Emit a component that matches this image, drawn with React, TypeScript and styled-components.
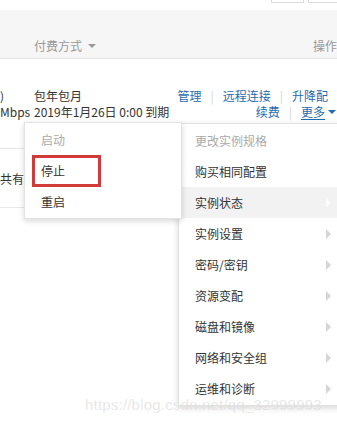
import React from "react";
import styled, { createGlobalStyle } from "styled-components";

const Global = createGlobalStyle`
  html, body { margin: 0; padding: 0; background: #fff; }
  body { width: 337px; height: 423px; overflow: hidden; font-family: "Noto Sans CJK SC", "Noto Sans", sans-serif; font-size: 12px; color: #333; }
`;

const Page = styled.div`
  position: relative;
  width: 337px;
  height: 423px;
  overflow: hidden;
  background: #fff;
`;

const Toolbar = styled.div`
  height: 10px;
  display: flex;
  justify-content: flex-end;
  align-items: flex-end;
  gap: 4px;
  padding: 0 0 7px 0;
  box-sizing: border-box;
  overflow: hidden;
  margin-right: -4px;
`;

const ToolButton = styled.div<{ $w: number }>`
  flex: none;
  width: ${(p) => p.$w}px;
  height: 30px;
  border: 1px solid #dcdcdc;
  background: #fff;
  box-sizing: border-box;
`;

const HeadRow = styled.div`
  height: 49px;
  display: grid;
  grid-template-columns: 34px 1fr auto;
  align-items: start;
  padding-top: 27px;
  box-sizing: border-box;
  background: #f6f6f6;
  border-bottom: 1px solid #e4e4e4;
  color: #999;
  line-height: 18px;
  white-space: nowrap;
`;

const HeadCell = styled.div<{ $right?: boolean }>`
  display: flex;
  align-items: center;
  gap: 6px;
  ${(p) => (p.$right ? "width: 24px; overflow: hidden;" : "")}
`;

const Caret = styled.span`
  width: 0;
  height: 0;
  border-left: 4px solid transparent;
  border-right: 4px solid transparent;
  border-top: 4px solid currentColor;
  display: inline-block;
`;

const BodyRow = styled.div`
  height: 89px;
  display: grid;
  grid-template-columns: 34px 1fr auto;
  align-items: center;
  border-bottom: 1px solid #e8e8e8;
  line-height: 16px;
  white-space: nowrap;
`;

const Cell = styled.div`
  display: flex;
  flex-direction: column;
`;

const Ops = styled.div`
  display: flex;
  flex-direction: column;
  align-items: flex-end;
`;

const OpLine = styled.div<{ $pad: number }>`
  display: flex;
  align-items: center;
  gap: 9px;
  padding-right: ${(p) => p.$pad}px;
  color: #1f6cb0;
`;

const Sep = styled.span`
  color: #d4d4d4;
`;

const More = styled.span`
  display: inline-flex;
  align-items: center;
  gap: 3px;
  text-decoration: underline;
  text-underline-offset: 2px;
`;

const FootRow = styled.div`
  height: 58px;
  display: flex;
  align-items: center;
  border-bottom: 1px solid #e8e8e8;
  white-space: nowrap;
`;

const Menu = styled.div<{ $left: number; $top: number; $width: number; $z: number }>`
  position: absolute;
  left: ${(p) => p.$left}px;
  top: ${(p) => p.$top}px;
  width: ${(p) => p.$width}px;
  z-index: ${(p) => p.$z};
  background: #fff;
  border: 1px solid #e2e2e2;
  box-shadow: 0 2px 6px rgba(0, 0, 0, 0.16);
  padding: 1px 0;
  box-sizing: border-box;
`;

const Item = styled.div<{ $disabled?: boolean; $active?: boolean; $padR?: number }>`
  position: relative;
  height: 31px;
  display: flex;
  align-items: center;
  justify-content: space-between;
  padding: 0 ${(p) => p.$padR ?? 8}px 0 16px;
  color: ${(p) => (p.$disabled ? "#aaa" : "#333")};
  background: ${(p) => (p.$active ? "#f2f2f2" : "transparent")};
  white-space: nowrap;
`;

const Arrow = styled.span<{ $light?: boolean }>`
  width: 0;
  height: 0;
  border-top: 5px solid transparent;
  border-bottom: 5px solid transparent;
  border-left: 5px solid ${(p) => (p.$light ? "#fbfbfb" : "#d6d6d6")};
`;

const Highlight = styled.div`
  position: absolute;
  left: 7px;
  top: 0;
  width: 69px;
  height: 32px;
  border: 3px solid #d23a3a;
  box-sizing: border-box;
`;

const Watermark = styled.div`
  position: absolute;
  left: 85px;
  top: 396px;
  z-index: 5;
  font-family: "Liberation Sans", Arial, sans-serif;
  font-size: 15px;
  letter-spacing: 0.2px;
  color: rgba(200, 200, 200, 0.55);
  -webkit-text-stroke: 0.4px rgba(255, 255, 255, 0.6);
  white-space: nowrap;
`;

const rightItems = [
  "购买相同配置",
  "实例状态",
  "实例设置",
  "密码/密钥",
  "资源变配",
  "磁盘和镜像",
  "网络和安全组",
  "运维和诊断",
];

export default function App() {
  return (
    <Page>
      <Global />
      <Toolbar>
        <ToolButton $w={33} />
        <ToolButton $w={33} />
      </Toolbar>
      <HeadRow>
        <HeadCell />
        <HeadCell>
          付费方式 <Caret />
        </HeadCell>
        <HeadCell $right>操作</HeadCell>
      </HeadRow>
      <BodyRow>
        <Cell>
          <span>)</span>
          <span>Mbps</span>
        </Cell>
        <Cell>
          <span>包年包月</span>
          <span>2019年1月26日 0:00 到期</span>
        </Cell>
        <Ops>
          <OpLine $pad={9}>
            <span>管理</span>
            <Sep>|</Sep>
            <span>远程连接</span>
            <Sep>|</Sep>
            <span>升降配</span>
          </OpLine>
          <OpLine $pad={1}>
            <span>续费</span>
            <Sep>|</Sep>
            <More>
              更多 <Caret />
            </More>
          </OpLine>
        </Ops>
      </BodyRow>
      <FootRow>共有1条</FootRow>

      <Menu $left={24} $top={122} $width={158} $z={3}>
        <Item $disabled>启动</Item>
        <Item>
          <Highlight />
          停止
        </Item>
        <Item>重启</Item>
      </Menu>

      <Menu $left={178} $top={123} $width={170} $z={2}>
        <Item $disabled>更改实例规格</Item>
        {rightItems.map((t, i) => (
          <Item key={t} $active={i === 1} $padR={16}>
            {t}
            {i > 0 && <Arrow $light={i === 1} />}
          </Item>
        ))}
      </Menu>

      <Watermark>https://blog.csdn.net/qq_32999993</Watermark>
    </Page>
  );
}
